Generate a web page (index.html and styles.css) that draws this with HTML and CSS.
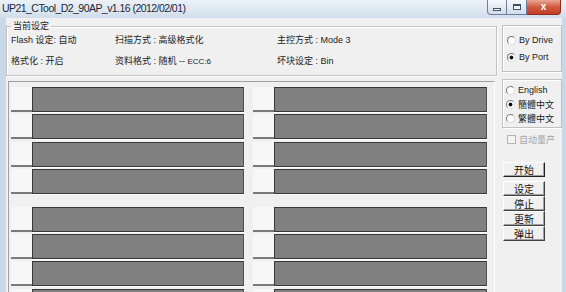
FILE: index.html
```html
<!DOCTYPE html>
<html>
<head>
  <meta name="viewport" content="width=device-width, initial-scale=1.0">
  <link rel="stylesheet" href="styles.css">
</head>
<body>
  <div class="window">
    <div class="titlebar">
      <span class="title">UP21_CTool_D2_90AP_v1.16 (2012/02/01)</span>
      <div class="caption-btns">
        <span class="cap min"><i></i></span>
        <span class="cap max"><i></i></span>
        <span class="cap close">x</span>
      </div>
    </div>

    <div class="client">
      <div class="main">
        <fieldset class="settings">
          <legend>当前设定</legend>
          <div class="settings-grid">
            <span>Flash 设定: 自动</span>
            <span>扫描方式 : 高级格式化</span>
            <span>主控方式 : Mode 3</span>
            <span>格式化 : 开启</span>
            <span>资料格式 : 随机 -- <small>ECC:6</small></span>
            <span>坏块设定 : Bin</span>
          </div>
        </fieldset>

        <div class="ports">
          <div class="bank">
            <div class="port"><span class="tag"></span><span class="bar"></span></div>
            <div class="port"><span class="tag"></span><span class="bar"></span></div>
            <div class="port"><span class="tag"></span><span class="bar"></span></div>
            <div class="port"><span class="tag"></span><span class="bar"></span></div>
            <div class="port"><span class="tag"></span><span class="bar"></span></div>
            <div class="port"><span class="tag"></span><span class="bar"></span></div>
            <div class="port"><span class="tag"></span><span class="bar"></span></div>
            <div class="port"><span class="tag"></span><span class="bar"></span></div>
          </div>
          <div class="bank">
            <div class="port"><span class="tag"></span><span class="bar"></span></div>
            <div class="port"><span class="tag"></span><span class="bar"></span></div>
            <div class="port"><span class="tag"></span><span class="bar"></span></div>
            <div class="port"><span class="tag"></span><span class="bar"></span></div>
            <div class="port"><span class="tag"></span><span class="bar"></span></div>
            <div class="port"><span class="tag"></span><span class="bar"></span></div>
            <div class="port"><span class="tag"></span><span class="bar"></span></div>
            <div class="port"><span class="tag"></span><span class="bar"></span></div>
          </div>
        </div>
      </div>

      <div class="side">
        <div class="box mode">
          <div class="opt"><span class="radio"></span>By Drive</div>
          <div class="opt"><span class="radio on"></span>By Port</div>
        </div>
        <div class="box lang">
          <div class="opt"><span class="radio"></span>English</div>
          <div class="opt cjk"><span class="radio on"></span>簡體中文</div>
          <div class="opt cjk"><span class="radio"></span>繁體中文</div>
        </div>
        <div class="check"><span class="checkbox"></span>自动量产</div>
        <button class="btn start">开始</button>
        <div class="btn-stack">
          <button class="btn">设定</button>
          <button class="btn">停止</button>
          <button class="btn">更新</button>
          <button class="btn">弹出</button>
        </div>
      </div>
    </div>
  </div>
</body>
</html>
```

FILE: styles.css
```css
* {
  box-sizing: border-box;
}

body {
  margin: 0;
  background: #c9d8e9;
  font-family: 'Liberation Sans', 'Noto Sans CJK SC', sans-serif;
  color: #1b1b1b;
  overflow: hidden;
}

.window {
  width: 566px;
  height: 292px;
  display: flex;
  flex-direction: column;
}

/* title bar */
.titlebar {
  height: 18px;
  flex: none;
  display: flex;
  justify-content: space-between;
  align-items: flex-start;
  background: linear-gradient(180deg, #eaf1f9 0%, #dde7f2 60%, #d0dcea 100%);
}

.title {
  font-family: 'Liberation Sans', sans-serif;
  font-size: 10.5px;
  letter-spacing: -0.55px;
  line-height: 17px;
  padding-left: 2px;
  color: #1c2533;
}

.caption-btns {
  display: flex;
  margin-right: 5px;
}

.cap {
  width: 20px;
  height: 15px;
  border: 1px solid #6d7f99;
  border-top: none;
  background: linear-gradient(#f6f8fc, #d3dcea);
  display: flex;
  align-items: center;
  justify-content: center;
}

.cap.min {
  border-radius: 0 0 0 4px;
}

.cap.max {
  border-left: none;
}

.cap.close {
  width: 34px;
  border-color: #8b2f22;
  border-left: none;
  border-radius: 0 0 4px 0;
  background: linear-gradient(#eaa797, #d25a42 50%, #c13c25);
  color: #fff;
  font: bold 10px 'Liberation Sans', sans-serif;
  line-height: 14px;
}

.min i {
  width: 8px;
  height: 3px;
  margin-top: 5px;
  background: #fff;
  border: 1px solid #3d4f69;
}

.max i {
  width: 8px;
  height: 6px;
  border: 1px solid #3d4f69;
  border-top-width: 2px;
  box-shadow: inset 0 0 0 1px #fff;
}

/* client area */
.client {
  flex: 1;
  display: flex;
  background: #f0f0f0;
  border-left: 6px solid #c9d8e9;
  border-right: 4px solid #c9d8e9;
  overflow: hidden;
}

.main {
  width: 491px;
  flex: none;
}

.settings {
  margin: 2px 0 0;
  padding: 0 4px 6px;
  border: 1px solid #c2c2c2;
  box-shadow: inset 1px 1px 0 #fff, 1px 1px 0 #fff;
  min-width: 0;
}

.settings legend {
  font-family: 'Noto Sans CJK SC', sans-serif;
  font-size: 9px;
  line-height: 12px;
  padding: 0 2px;
}

.settings-grid {
  display: grid;
  grid-template-columns: 104px 162px 1fr;
  grid-auto-rows: 16px;
  row-gap: 5px;
  font-size: 9px;
  line-height: 16px;
  white-space: nowrap;
}

.settings-grid small {
  font-size: 8px;
}

/* port bars */
.ports {
  margin: 5px 0 0 2px;
  width: 487px;
  height: 230px;
  padding: 5px 7px 0 2px;
  border-top: 1px solid #a0a0a0;
  border-left: 1px solid #a0a0a0;
  border-right: 1px solid #fff;
}

.bank {
  display: grid;
  grid-template-columns: 233px 234px;
  column-gap: 9px;
  grid-auto-rows: 25px;
  row-gap: 2.3px;
}

.bank + .bank {
  margin-top: 13px;
}

.port {
  display: flex;
}

.tag {
  width: 21px;
  flex: none;
  background: #f7f7f7;
  border-bottom: 2px solid #7a7a7a;
}

.bar {
  flex: 1;
  background: #808080;
  border: 1px solid #383838;
  border-right-color: #505050;
  box-shadow: 0 1px 0 #fff;
}

/* right side */
.side {
  margin-left: 5px;
  width: 60px;
  flex: none;
  display: flex;
  flex-direction: column;
  align-items: flex-start;
}

.box {
  width: 60px;
  border: 1px solid #c2c2c2;
  box-shadow: inset 1px 1px 0 #fff, 1px 1px 0 #fff;
  display: flex;
  flex-direction: column;
}

.mode {
  margin-top: 7px;
  height: 47px;
  padding: 7px 0 0 4px;
  row-gap: 3px;
}

.lang {
  margin-top: 7px;
  padding: 3px 0 2px 3px;
}

.opt {
  display: flex;
  align-items: center;
  gap: 3px;
  height: 14px;
  font-size: 9px;
  white-space: nowrap;
}

.opt.cjk {
  font-family: 'Noto Sans CJK SC', sans-serif;
}

.radio {
  width: 9px;
  height: 9px;
  flex: none;
  border-radius: 50%;
  border: 1px solid;
  border-color: #777 #dcdcdc #dcdcdc #777;
  background: #fff;
}

.radio.on {
  background: radial-gradient(circle, #111 0 1.6px, #fff 2.3px);
}

.check {
  margin: 4px 0 0 5px;
  display: flex;
  align-items: center;
  gap: 3px;
  height: 14px;
  color: #a6a6a6;
  font-family: 'Noto Sans CJK SC', sans-serif;
  font-size: 9px;
}

.checkbox {
  width: 9px;
  height: 9px;
  border: 1px solid #b4b4b4;
  background: #f4f4f4;
}

.btn {
  width: 42px;
  height: 15px;
  margin: 0 0 0 1px;
  padding: 0;
  display: block;
  font-family: 'Noto Sans CJK SC', sans-serif;
  font-size: 10px;
  line-height: 13px;
  color: #111;
  background: #f0f0f0;
  border: 1px solid;
  border-color: #fff #404040 #404040 #fff;
  box-shadow: inset -1px -1px 0 #a0a0a0;
}

.btn.start {
  margin-top: 16px;
  border-color: #fdfdfd #222 #222 #fdfdfd;
}

.btn-stack {
  margin-top: 4px;
}
```
